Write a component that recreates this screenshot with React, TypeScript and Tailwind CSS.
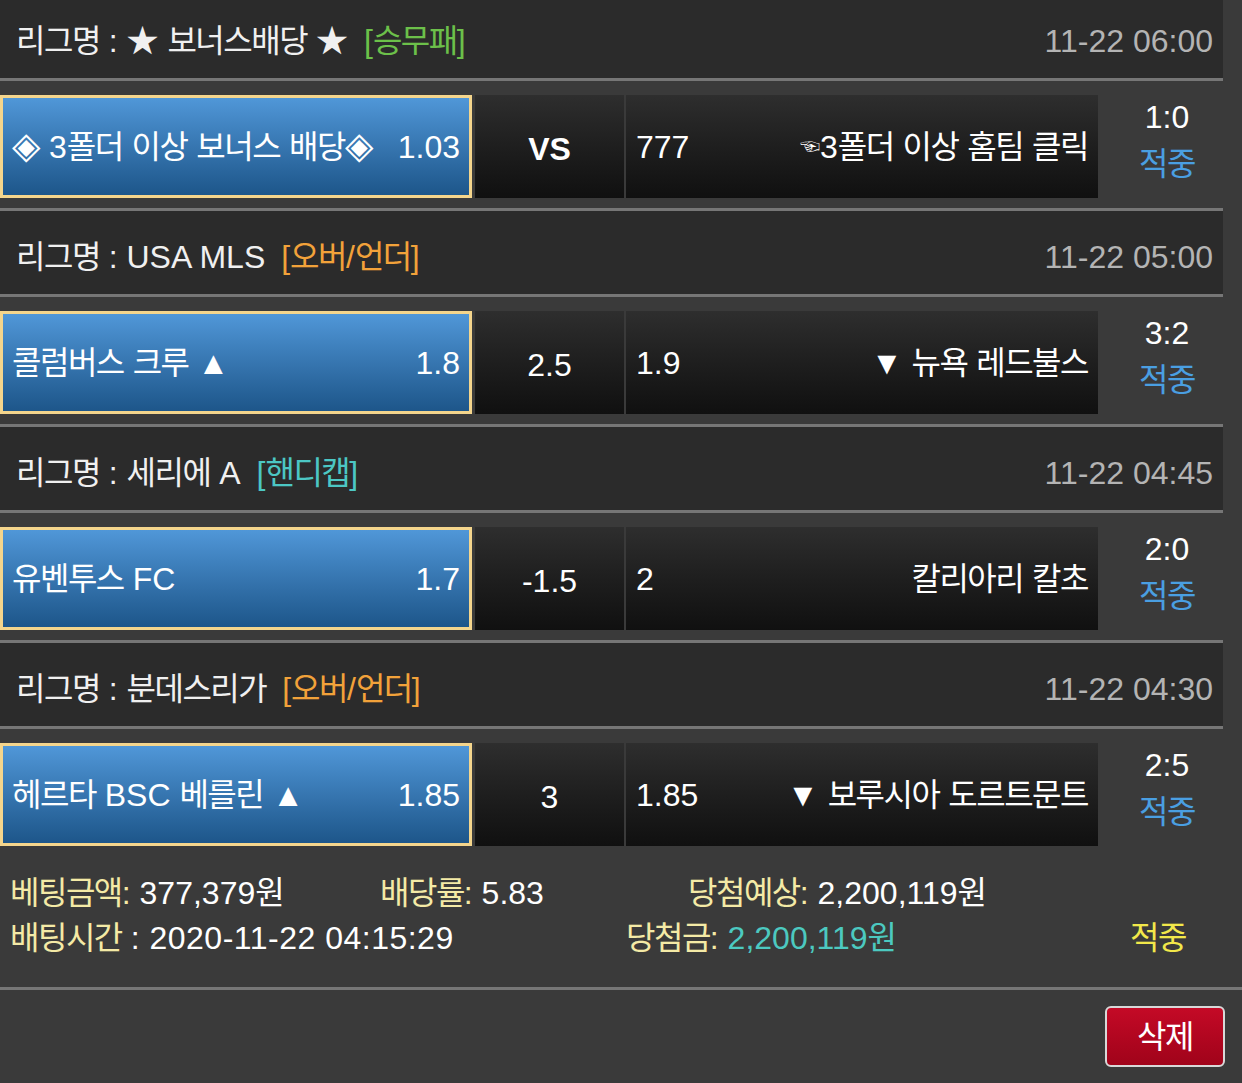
import React from "react";

function T({ s }: { s: string }) {
  const parts = s.split(/([\uAC00-\uD7A3]+|◈)/);
  return (
    <>
      {parts.map((p, i) =>
        p === "◈" ? (
          <span key={i} className="text-[37px] leading-none">
            ◈
          </span>
        ) : /[\uAC00-\uD7A3]/.test(p) ? (
          <span key={i} className="tracking-[-1.5px]">
            {p}
          </span>
        ) : (
          <React.Fragment key={i}>{p}</React.Fragment>
        )
      )}
    </>
  );
}

type Match = {
  league: string;
  tag: string;
  tagColor: string;
  time: string;
  home: string;
  homeOdds: string;
  mid: string;
  midBold?: boolean;
  awayOdds: string;
  away: string;
  hand?: boolean;
  score: string;
};

const matches: Match[] = [
  {
    league: "★ 보너스배당 ★",
    tag: "[승무패]",
    tagColor: "text-[#6cc04a]",
    time: "11-22 06:00",
    home: "◈ 3폴더 이상 보너스 배당◈",
    homeOdds: "1.03",
    mid: "VS",
    midBold: true,
    awayOdds: "777",
    away: "3폴더 이상 홈팀 클릭",
    hand: true,
    score: "1:0",
  },
  {
    league: "USA MLS",
    tag: "[오버/언더]",
    tagColor: "text-[#f2a23a]",
    time: "11-22 05:00",
    home: "콜럼버스 크루 ▲",
    homeOdds: "1.8",
    mid: "2.5",
    awayOdds: "1.9",
    away: "▼ 뉴욕 레드불스",
    score: "3:2",
  },
  {
    league: "세리에 A",
    tag: "[핸디캡]",
    tagColor: "text-[#4cc7c4]",
    time: "11-22 04:45",
    home: "유벤투스 FC",
    homeOdds: "1.7",
    mid: "-1.5",
    awayOdds: "2",
    away: "칼리아리 칼초",
    score: "2:0",
  },
  {
    league: "분데스리가",
    tag: "[오버/언더]",
    tagColor: "text-[#f2a23a]",
    time: "11-22 04:30",
    home: "헤르타 BSC 베를린 ▲",
    homeOdds: "1.85",
    mid: "3",
    awayOdds: "1.85",
    away: "▼ 보루시아 도르트문트",
    score: "2:5",
  },
];

function Divider() {
  return <div className="w-[1223px] h-[3px] bg-[#767676]" />;
}

export default function App() {
  return (
    <div
      className="w-[1242px] h-[1083px] bg-[#3a3a3a] text-white text-[32px] overflow-hidden"
      style={{ fontFamily: '"Liberation Sans", "Noto Sans CJK KR", sans-serif' }}
    >
      {matches.map((m, i) => (
        <div key={i}>
          <div
            className={`w-[1223px] ${i === 0 ? "h-[78px] pt-[4px]" : "h-[83px] pt-[9px]"} bg-[#2b2b2b] flex items-center justify-between pl-[16px] pr-[10px]`}
          >
            <div className="flex items-center whitespace-pre">
              <span className="text-[#f0f0f0]">
                <T s={`리그명 : ${m.league}`} />
              </span>
              <span className={`ml-[16px] ${m.tagColor}`}>
                <T s={m.tag} />
              </span>
            </div>
            <span className="text-[#b4b4b4]">{m.time}</span>
          </div>
          <Divider />
          <div className="h-[127px] flex pt-[14px] pb-[10px]">
            <div className="w-[472px] h-[103px] border-[3px] border-[#f4d58c] bg-gradient-to-b from-[#5097d8] to-[#1d568a] flex items-center justify-between pl-[9px] pr-[9px]">
              <span className="whitespace-nowrap">
                <T s={m.home} />
              </span>
              <span>{m.homeOdds}</span>
            </div>
            <div className="ml-[3px] w-[149px] h-[103px] bg-gradient-to-b from-[#2e2e2e] to-[#101010] flex items-center justify-center">
              <span className={`pt-[4px] ${m.midBold ? "font-bold" : ""}`}>{m.mid}</span>
            </div>
            <div className="ml-[2px] w-[472px] h-[103px] bg-gradient-to-b from-[#2e2e2e] to-[#101010] flex items-center justify-between pl-[10px] pr-[10px]">
              <span>{m.awayOdds}</span>
              <span className="whitespace-nowrap">
                {m.hand && <span className="text-[20px] relative top-[-4px]">☜</span>}
                <T s={m.away} />
              </span>
            </div>
            <div className="w-[138px] flex flex-col items-center justify-center leading-[47px] -mt-[12px]">
              <span>{m.score}</span>
              <span className="text-[#4a9fe2]">
                <T s="적중" />
              </span>
            </div>
          </div>
          {i < matches.length - 1 && <Divider />}
        </div>
      ))}
      <div className="pt-[15px] pb-[26px] leading-[45px]">
        <div className="flex pl-[10px]">
          <span className="w-[370px]">
            <span className="text-[#f4eaa6]">
              <T s="베팅금액:" />
            </span>{" "}
            <T s="377,379원" />
          </span>
          <span className="w-[308px]">
            <span className="text-[#f4eaa6]">
              <T s="배당률:" />
            </span>{" "}
            5.83
          </span>
          <span>
            <span className="text-[#f4eaa6]">
              <T s="당첨예상:" />
            </span>{" "}
            <T s="2,200,119원" />
          </span>
        </div>
        <div className="flex pl-[10px]">
          <span className="w-[616px]">
            <span className="text-[#f4eaa6]">
              <T s="배팅시간" />
            </span>{" "}
            <span className="tracking-[0.5px]">: 2020-11-22 04:15:29</span>
          </span>
          <span className="w-[504px]">
            <span className="text-[#f4eaa6]">
              <T s="당첨금:" />
            </span>{" "}
            <span className="text-[#4cc9c0]">
              <T s="2,200,119원" />
            </span>
          </span>
          <span className="text-[#f2e84a]">
            <T s="적중" />
          </span>
        </div>
      </div>
      <div className="w-full h-[3px] bg-[#767676]" />
      <div className="flex justify-end pt-[16px] pr-[17px]">
        <button className="w-[120px] h-[61px] rounded-[6px] border-[2px] border-[#d8d8d8] bg-gradient-to-b from-[#c40a26] to-[#a0031a] text-white text-[32px] flex items-center justify-center">
          <T s="삭제" />
        </button>
      </div>
    </div>
  );
}
